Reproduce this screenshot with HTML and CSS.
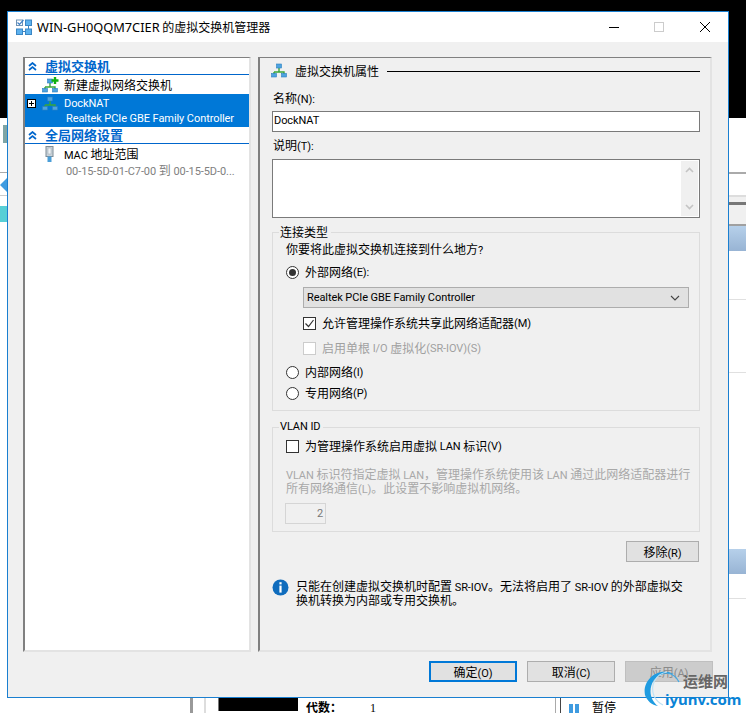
FILE: index.html
```html
<!DOCTYPE html>
<html lang="zh-CN">
<head>
<meta charset="utf-8">
<title>虚拟交换机管理器</title>
<link rel="stylesheet" href="styles.css">
</head>
<body>
<svg class="defs" width="0" height="0" aria-hidden="true">
  <symbol id="net" viewBox="0 0 16 16">
    <path d="M8 4v5M3 9h10v3M3 9v3" fill="none" stroke="#3aa53a" stroke-width="1.4"/>
    <rect x="5.5" y="1" width="5" height="4" fill="#4da3e0" stroke="#2a7fc0" stroke-width=".6"/>
    <rect x="0.5" y="10.5" width="5" height="3.5" fill="#4da3e0" stroke="#2a7fc0" stroke-width=".6"/>
    <rect x="10.5" y="10.5" width="5" height="3.5" fill="#4da3e0" stroke="#2a7fc0" stroke-width=".6"/>
  </symbol>
  <symbol id="collapse" viewBox="0 0 9 9">
    <path d="M1 4l3.5-3L8 4M1 8l3.5-3L8 8" fill="none" stroke="#0066cc" stroke-width="1.7"/>
  </symbol>
</svg>

<div class="desktop">
  <div class="bg bg-left"></div>
  <div class="bg bg-right"></div>
  <div class="bg bg-line r1"></div>
  <div class="bg bg-line r2"></div>
  <div class="bg bg-band r3"></div>
  <div class="bg bg-band r4"></div>
  <div class="bg bg-blue r5"></div>
  <div class="bg bg-line r6"></div>
  <div class="bg bg-line r7"></div>
  <div class="bg bg-line r8"></div>
  <div class="bg bg-line r9"></div>
  <div class="bg bg-blue r10"></div>
  <div class="bg bg-line r11"></div>
  <div class="bg l-icon"></div>
  <div class="bg l-line1"></div>
  <div class="bg l-arrow"></div>
  <div class="bg l-line2"></div>
  <div class="bg l-teal"></div>
  <div class="bg bottom"></div>
  <div class="bg bot-v1"></div>
  <div class="bg bot-v2"></div>
  <div class="bg bot-black"></div>
  <div class="bg bot-label">代数：</div>
  <div class="bg bot-num">1</div>
  <div class="bg bot-v3"></div>
  <div class="bg bot-v4"></div>
  <div class="bg bot-pause"></div>
  <div class="bg bot-pause-text">暂停</div>

  <div class="window">
    <header class="titlebar">
      <svg class="app-icon" viewBox="0 0 16 16" width="16" height="16" aria-hidden="true">
        <rect x="0.5" y="1" width="6" height="5.5" fill="#fff" stroke="#6f93b5"/>
        <path d="M1.5 3.5l2 2L7.5 1" fill="none" stroke="#3f7fc4" stroke-width="1.2"/>
        <rect x="9.5" y="1" width="6" height="5.5" fill="#5cb1ee" stroke="#3b86c4"/>
        <rect x="0.5" y="10" width="6" height="5.5" fill="#5cb1ee" stroke="#3b86c4"/>
        <rect x="9.5" y="10" width="6" height="5.5" fill="#5cb1ee" stroke="#3b86c4"/>
        <path d="M12.5 6.5V10M6.5 12.5h3" stroke="#3b86c4"/>
      </svg>
      <span class="title"><span class="title-lat">WIN-GH0QQM7CIER</span> 的虚拟交换机管理器</span>
      <svg class="winbtns" viewBox="0 0 101 16" width="101" height="16" aria-hidden="true">
        <path d="M0 8.5h10" stroke="#000"/>
        <rect x="45.5" y="3.5" width="9" height="9" fill="none" stroke="#ccc"/>
        <path d="M91 3l10 10M101 3l-10 10" stroke="#000" fill="none"/>
      </svg>
    </header>

    <div class="body">
      <nav class="tree">
        <div class="section"><svg class="chev"><use href="#collapse"/></svg><span>虚拟交换机</span></div>
        <div class="row new">
          <svg class="net" viewBox="0 0 18 16" aria-hidden="true">
            <use href="#net" width="16" height="16" y="1"/>
            <path d="M13 0v7M9.5 3.5h7" stroke="#10b010" stroke-width="2.4"/>
          </svg>
          <span>新建虚拟网络交换机</span>
        </div>
        <div class="selected">
          <div class="sel-main">
            <svg class="expander" viewBox="0 0 9 9" width="9" height="9" aria-hidden="true">
              <rect x=".5" y=".5" width="8" height="8" fill="#fff" stroke="#000"/>
              <path d="M2 4.5h5M4.5 2v5" stroke="#000"/>
            </svg>
            <svg class="net"><use href="#net"/></svg>
            <span class="l">DockNAT</span>
          </div>
          <div class="sel-sub l">Realtek PCIe GBE Family Controller</div>
        </div>
        <div class="section"><svg class="chev"><use href="#collapse"/></svg><span>全局网络设置</span></div>
        <div class="row mac">
          <svg class="plug" viewBox="0 0 9 16" width="9" height="16" aria-hidden="true">
            <rect x="1" y="0.5" width="7" height="10" fill="#c9d3da" stroke="#7f8c96"/>
            <rect x="3" y="2" width="3" height="6" fill="#eef2f5" stroke="#9aa5ad" stroke-width=".5"/>
            <rect x="2.5" y="10.5" width="4" height="5.5" fill="#4a9ed8"/>
          </svg>
          <span><span class="l">MAC</span> 地址范围</span>
        </div>
        <div class="mac-sub"><span class="l">00-15-5D-01-C7-00</span> 到 <span class="l">00-15-5D-0...</span></div>
      </nav>

      <main class="props">
        <div class="props-head">
          <svg class="net"><use href="#net"/></svg>
          <span>虚拟交换机属性</span>
          <i class="rule"></i>
        </div>

        <label class="field-label first">名称<span class="l">(N):</span></label>
        <div class="input l">DockNAT</div>
        <label class="field-label second">说明<span class="l">(T):</span></label>
        <div class="textarea">
          <div class="scroll">
            <svg viewBox="0 0 9 6" width="9" height="6" aria-hidden="true"><path d="M1 5l3.5-3.5L8 5" fill="none" stroke="#c4c4c4" stroke-width="1.6"/></svg>
            <svg viewBox="0 0 9 6" width="9" height="6" aria-hidden="true"><path d="M1 1l3.5 3.5L8 1" fill="none" stroke="#c4c4c4" stroke-width="1.6"/></svg>
          </div>
        </div>

        <fieldset class="group conn">
          <legend>连接类型</legend>
          <div class="question">你要将此虚拟交换机连接到什么地方<span class="l">?</span></div>
          <div class="opt ext"><span class="radio on"></span>外部网络<span class="l">(E):</span></div>
          <div class="combo">
            <span class="l">Realtek PCIe GBE Family Controller</span>
            <svg viewBox="0 0 10 6" width="10" height="6" aria-hidden="true"><path d="M1 1l4 4 4-4" fill="none" stroke="#444" stroke-width="1.1"/></svg>
          </div>
          <div class="opt sub share">
            <span class="check">
              <svg viewBox="0 0 13 13" width="13" height="13" aria-hidden="true"><path d="M2.5 6.5l3 3 5-6.5" fill="none" stroke="#333" stroke-width="1.2"/></svg>
            </span>允许管理操作系统共享此网络适配器<span class="l">(M)</span>
          </div>
          <div class="opt sub sriov muted"><span class="check off"></span>启用单根&nbsp;<span class="l">I/O</span>&nbsp;虚拟化<span class="l">(SR-IOV)(S)</span></div>
          <div class="opt int"><span class="radio"></span>内部网络<span class="l">(I)</span></div>
          <div class="opt priv"><span class="radio"></span>专用网络<span class="l">(P)</span></div>
        </fieldset>

        <fieldset class="group vlan">
          <legend class="l">VLAN ID</legend>
          <div class="opt vlan-opt"><span class="check"></span>为管理操作系统启用虚拟&nbsp;<span class="l">LAN</span>&nbsp;标识<span class="l">(V)</span></div>
          <p class="vlan-desc"><span class="l">VLAN</span> 标识符指定虚拟 <span class="l">LAN</span>，管理操作系统使用该 <span class="l">LAN</span> 通过此网络适配器进行<br>所有网络通信<span class="l">(L)</span>。此设置不影响虚拟机网络。</p>
          <div class="vlan-num l">2</div>
        </fieldset>

        <div class="remove-row"><button class="btn remove">移除<span class="l">(R)</span></button></div>

        <div class="info">
          <svg viewBox="0 0 17 17" width="17" height="17" aria-hidden="true">
            <circle cx="8.5" cy="8.5" r="8" fill="#0f6cbd"/>
            <rect x="7.4" y="3.2" width="2.2" height="2.2" fill="#fff"/>
            <rect x="7.4" y="6.6" width="2.2" height="7" fill="#fff"/>
          </svg>
          <p>只能在创建虚拟交换机时配置 <span class="l">SR-IOV</span>。无法将启用了 <span class="l">SR-IOV</span> 的外部虚拟交<br>换机转换为内部或专用交换机。</p>
        </div>
      </main>
    </div>

    <footer class="actions">
      <button class="btn primary">确定<span class="l">(O)</span></button>
      <button class="btn">取消<span class="l">(C)</span></button>
      <button class="btn disabled">应用<span class="l">(A)</span></button>
    </footer>
  </div>

  <div class="watermark">
    <svg viewBox="0 0 60 48" width="60" height="48" aria-hidden="true">
      <path d="M31 9C14 1 -1 16 2 30c2 6 7 10 13 11C7 35 5 24 11 15 16 9 23 7 31 9z" fill="#1f9be0"/>
      <path d="M24 7C12 9 7 21 11 31c2 4 5 7 9 9" fill="none" stroke="#bfe2f5" stroke-width="1.2"/>
      <path d="M24 8c6 1 10 5 12 9" fill="none" stroke="#3fa9e6" stroke-width="1.2"/>
    </svg>
    <span class="wm-cn">运维网</span>
    <span class="wm-en">iyunv.com</span>
  </div>
</div>
</body>
</html>
```

FILE: styles.css
```css
* { box-sizing: border-box; }
html, body { margin: 0; padding: 0; }
body {
  width: 746px;
  height: 713px;
  overflow: hidden;
  background: #000;
  font: 12px/16px "Noto Sans CJK SC", "Noto Sans", sans-serif;
  color: #000;
}
.l { font-family: Roboto, "Noto Sans", sans-serif; font-size: 11px; line-height: 1; letter-spacing: -0.08px; }
.defs { position: absolute; }
.desktop { position: relative; width: 746px; height: 713px; overflow: hidden; }

/* Windows behind the dialog */
.bg { position: absolute; }
.bg-left { left: 0; top: 118px; width: 8px; height: 595px; background: #fff; }
.bg-right { left: 728px; top: 118px; width: 18px; height: 595px; background: #fff; }
.bg-line { left: 729px; width: 17px; height: 1px; background: #e0e0e0; }
.r1 { top: 172px; height: 2px; background: #aaa; }
.r2 { top: 195px; height: 2px; background: #ddd; }
.bg-band { left: 729px; width: 17px; background: #f0f0f0; }
.r3 { top: 197px; height: 5px; }
.r4 { top: 205px; height: 19px; }
.bg-blue { left: 729px; width: 17px; background: linear-gradient(#b6d0ea, #98b4d4); }
.r5 { top: 226px; height: 25px; }
.r6 { top: 202px; height: 3px; background: #777; }
.r7 { top: 224px; height: 2px; background: #a0a0a0; }
.r8 { top: 299px; }
.r9 { top: 372px; }
.r10 { top: 549px; height: 25px; }
.r11 { top: 598px; }
.l-icon { left: 3px; top: 125px; width: 4px; height: 18px; background: #7fa5a5; }
.l-line1 { left: 0; top: 172px; width: 7px; height: 1px; background: #aaa; }
.l-arrow { left: 0; top: 178px; width: 0; height: 0; border: 7px solid transparent; border-right-color: #3f9be0; border-left-width: 0; }
.l-line2 { left: 0; top: 195px; width: 7px; height: 1px; background: #ccc; }
.l-teal { left: 0; top: 206px; width: 7px; height: 16px; background: #57cfd6; }
.bottom { left: 0; top: 698px; width: 746px; height: 15px; background: #fff; }
.bot-v1 { left: 190px; top: 698px; width: 3px; height: 15px; background: #999; }
.bot-v2 { left: 204px; top: 698px; width: 2px; height: 15px; background: #ddd; }
.bot-black { left: 218px; top: 698px; width: 80px; height: 13px; background: #000; border-left: 1px solid #777; }
.bot-label { left: 306px; top: 701px; font-weight: 700; line-height: 12px; }
.bot-num { left: 370px; top: 703px; font-family: "Liberation Serif", serif; line-height: 10px; }
.bot-v3 { left: 555px; top: 698px; width: 1px; height: 15px; background: #aaa; }
.bot-v4 { left: 560px; top: 698px; width: 1px; height: 15px; background: #444; }
.bot-pause { left: 569px; top: 704px; width: 10px; height: 9px; border-left: 4px solid #3f9be0; border-right: 4px solid #3f9be0; }
.bot-pause-text { left: 592px; top: 701px; line-height: 12px; }

/* Dialog window */
.window {
  position: absolute;
  left: 7px;
  top: 11px;
  width: 722px;
  height: 687px;
  display: flex;
  flex-direction: column;
  background: #f0f0f0;
  border: 1px solid #1a7fd0;
}
.titlebar {
  height: 30px;
  display: flex;
  align-items: center;
  padding-left: 8px;
  background: #fff;
  flex: none;
}
.app-icon { flex: none; }
.title { margin-left: 5px; flex: 1; }
.title-lat { font-family: "Noto Sans", sans-serif; font-size: 12.8px; line-height: 1; }
.winbtns { flex: none; margin-right: 18px; }

.body {
  display: flex;
  gap: 7px;
  padding: 15px 16px 0 15px;
  height: 610px;
  flex: none;
}

/* Left tree */
.tree {
  width: 228px;
  background: #fff;
  border: 2px solid #e3e3e3;
  border-top-color: #808080;
  border-left-color: #808080;
  border-top-width: 1px;
  flex: none;
  overflow: hidden;
}
.section {
  height: 17px;
  display: flex;
  align-items: center;
  border-bottom: 1px solid #0066cc;
  color: #0066cc;
  font-size: 13px;
  font-weight: 700;
  padding-left: 3px;
}
.section span { margin-left: 8px; }
.chev { width: 9px; height: 9px; }
.row { display: flex; align-items: center; }
.row.new { height: 19px; padding-left: 17px; }
.row.new > span { margin-left: 4px; }
.net { width: 16px; height: 16px; flex: none; }
.row.new .net { width: 18px; }
.selected { height: 33px; background: #0078d7; color: #fff; }
.sel-main { display: flex; align-items: center; height: 18px; padding: 1px 0 0 2px; }
.expander { flex: none; margin-right: 6px; }
.sel-main .l { margin-left: 6px; }
.sel-sub { padding-left: 41px; line-height: 14px; white-space: nowrap; }
.row.mac { height: 18px; padding-left: 20px; margin-top: 1px; }
.plug { flex: none; margin-right: 10px; }
.mac-sub { padding-left: 41px; color: #808080; line-height: 14px; white-space: nowrap; }

/* Right panel */
.props {
  flex: 1;
  background: #f0f0f0;
  border: 2px solid #e3e3e3;
  border-top-color: #808080;
  border-left-color: #808080;
  border-top-width: 1px;
  padding: 5px 10px 0 12px;
}
.props-head { display: flex; align-items: center; height: 16px; margin-left: -1px; }
.props-head > span { margin-left: 8px; }
.rule { flex: 1; height: 1px; background: #000; margin-left: 8px; }
.field-label { display: block; margin-left: 1px; }
.field-label.first { margin-top: 11px; }
.field-label.second { margin-top: 5px; }
.input {
  height: 21px;
  margin-top: 5px;
  background: #fff;
  border: 1px solid #7a7a7a;
  padding-left: 1px;
  line-height: 18px;
}
.textarea {
  height: 59px;
  margin-top: 6px;
  background: #fff;
  border: 1px solid #7a7a7a;
  display: flex;
  justify-content: flex-end;
  padding: 1px;
}
.scroll {
  width: 17px;
  background: #f0f0f0;
  display: flex;
  flex-direction: column;
  justify-content: space-between;
  align-items: center;
  padding: 6px 0;
}

.group {
  margin: 0;
  padding: 0 0 0 13px;
  border: 1px solid #dcdcdc;
  width: 428px;
}
.group legend { padding: 0 3px 0 1px; margin-left: -7px; line-height: 14px; }
.conn { margin-top: 7px; height: 186px; }
.question { margin-top: 2px; }
.opt { display: flex; align-items: center; height: 16px; }
.radio, .check { width: 13px; height: 13px; flex: none; margin-right: 6px; background: #fff; border: 1px solid #333; }
.radio { border-radius: 50%; position: relative; }
.radio.on::after {
  content: "";
  position: absolute;
  left: 2px; top: 2px;
  width: 7px; height: 7px;
  border-radius: 50%;
  background: #333;
}
.ext { margin-top: 7px; }
.combo {
  width: 386px;
  height: 21px;
  margin: 7px 0 0 17px;
  display: flex;
  align-items: center;
  justify-content: space-between;
  padding: 0 8px 0 3px;
  background: #e1e1e1;
  border: 1px solid #adadad;
}
.sub { margin-left: 17px; }
.share { margin-top: 7px; }
.sriov { margin-top: 9px; }
.muted { color: #a0a0a0; }
.check.off { border-color: #ccc; }
.check svg { display: block; margin: -1px; }
.int { margin-top: 8px; }
.priv { margin-top: 5px; }

.vlan { margin-top: 9px; height: 112px; }
.vlan-opt { margin-top: 4px; }
.vlan-desc { margin: 13px 0 0; color: #a8a8a8; line-height: 13px; white-space: nowrap; }
.vlan-num {
  width: 41px;
  height: 21px;
  margin-top: 8px;
  margin-left: -1px;
  border: 1px solid #d5d5d5;
  color: #777;
  text-align: right;
  padding-right: 2px;
  line-height: 19px;
}
.remove-row { display: flex; justify-content: flex-end; width: 427px; margin-top: 9px; }

.btn {
  width: 88px;
  height: 21px;
  padding: 0;
  background: #e1e1e1;
  border: 1px solid #adadad;
  font: inherit;
  color: #000;
}
.btn.remove { width: 73px; }
.info { display: flex; gap: 7px; margin-top: 17px; width: 428px; }
.info svg { flex: none; }
.info p { margin: 0; line-height: 14px; white-space: nowrap; }

.actions {
  display: flex;
  justify-content: flex-end;
  gap: 10px;
  padding: 9px 15px 0 0;
}
.btn.primary { border: 2px solid #0078d7; }
.btn.disabled { background: #ccc; color: #8a8a8a; border-color: #bfbfbf; }

.watermark { position: absolute; left: 643px; top: 665px; width: 103px; height: 48px; }
.watermark svg { position: absolute; left: 0; top: 0; }
.wm-cn { position: absolute; left: 40px; top: 7px; font-size: 15px; line-height: 18px; color: #666; font-weight: 700; }
.wm-en { position: absolute; left: 22px; top: 24px; font-family: "Noto Sans", sans-serif; font-size: 15px; line-height: 20px; font-weight: 700; color: #0a83d6; }
```
